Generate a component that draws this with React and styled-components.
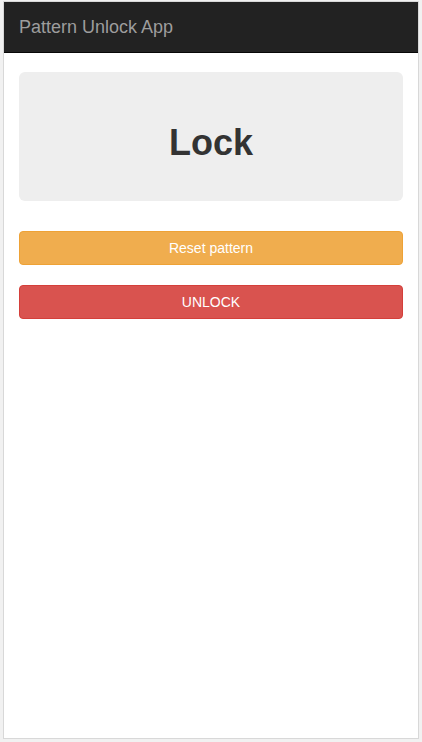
import React from 'react';
import styled, { createGlobalStyle } from 'styled-components';

const GlobalStyle = createGlobalStyle`
  html, body {
    margin: 0;
    padding: 0;
    background: #f1f1f1;
    font-family: "Liberation Sans", Arial, sans-serif;
  }
`;

const Frame = styled.div`
  box-sizing: border-box;
  width: 416px;
  height: 738px;
  margin: 1px 0 0 3px;
  border: 1px solid #d8d8d8;
  background: #fff;
  display: flex;
  flex-direction: column;
`;

const Navbar = styled.header`
  height: 50px;
  background: #222;
  border-bottom: 1px solid #080808;
  display: flex;
  align-items: center;
  padding: 0 15px;
`;

const Brand = styled.span`
  color: #9d9d9d;
  font-size: 18px;
  line-height: 20px;
`;

const Container = styled.main`
  padding: 19px 15px 0;
  display: flex;
  flex-direction: column;
  gap: 20px;
`;

const Jumbotron = styled.div`
  box-sizing: border-box;
  height: 129px;
  padding-top: 13px;
  background: #eee;
  border-radius: 6px;
  display: flex;
  align-items: center;
  justify-content: center;
  margin-bottom: 10px;

  h1 {
    margin: 0;
    font-size: 36px;
    font-weight: bold;
    color: #333;
  }
`;

const Button = styled.button`
  box-sizing: border-box;
  width: 100%;
  height: 34px;
  border-radius: 4px;
  border: 1px solid ${p => p.$border};
  background: ${p => p.$bg};
  color: #fff;
  font-family: "Liberation Sans", Arial, sans-serif;
  font-size: 14px;
  cursor: pointer;
`;

const App = () => (
  <>
    <GlobalStyle />
    <Frame>
      <Navbar>
        <Brand>Pattern Unlock App</Brand>
      </Navbar>
      <Container>
        <Jumbotron>
          <h1>Lock</h1>
        </Jumbotron>
        <Button $bg="#f0ad4e" $border="#eea236">Reset pattern</Button>
        <Button $bg="#d9534f" $border="#d43f3a">UNLOCK</Button>
      </Container>
    </Frame>
  </>
);

export default App;
